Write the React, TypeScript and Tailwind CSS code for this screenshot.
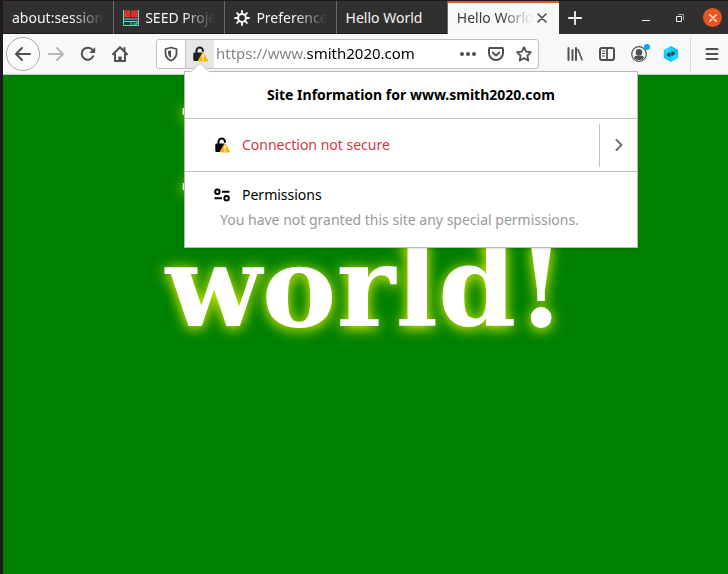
import React, { useState } from "react";

type IconProps = { className?: string };

const ArrowIcon = ({ className = "" }: IconProps) => (
  <svg viewBox="0 0 16 16" className={`size-4 ${className}`} fill="none" stroke="currentColor" strokeWidth="2" strokeLinecap="round" strokeLinejoin="round" aria-hidden="true">
    <path d="M15 8H1.5M7 2 1 8l6 6" />
  </svg>
);

const ReloadIcon = () => (
  <svg viewBox="0 0 16 16" className="size-4" aria-hidden="true">
    <path d="M13.2 10.2A6 6 0 1 1 12.6 4.2" fill="none" stroke="currentColor" strokeWidth="2" strokeLinecap="round" />
    <path d="M15.2 1v5.2a.8.8 0 0 1-.8.8H9.2z" fill="currentColor" />
  </svg>
);

const HomeIcon = () => (
  <svg viewBox="0 0 16 16" className="size-4" fill="none" stroke="currentColor" strokeWidth="2" strokeLinecap="round" strokeLinejoin="round" aria-hidden="true">
    <path d="M1 8.2 8 1.3l7 6.900M3 8v7h10V8" />
    <path d="M8 14.500V10.500" strokeWidth="3.200" strokeLinecap="butt" />
    <path d="M12.500 2v2" />
  </svg>
);

const ShieldIcon = () => (
  <svg viewBox="0 0 16 16" className="size-4" aria-hidden="true">
    <path d="M8 1.500 13.500 3v4c0 3.500-2 6.200-5.500 7.700C4.500 13.200 2.500 10.500 2.500 7V3z" fill="none" stroke="currentColor" strokeWidth="1.800" strokeLinejoin="round" />
    <path d="M8 4.200v7.800C6 10.700 5 9 5 7V4.900z" fill="currentColor" />
  </svg>
);

const InsecureLockIcon = () => (
  <svg viewBox="0 0 16 16" className="size-4" aria-hidden="true">
    <path d="M4.500 7.500V4.600a3.200 3.200 0 0 1 6.400 0v1.200" fill="none" stroke="currentColor" strokeWidth="2" />
    <path d="M2.500 6.500h8L6 15H2.500a1.200 1.200 0 0 1-1.200-1.200V7.700a1.200 1.200 0 0 1 1.200-1.200z" fill="currentColor" />
    <path d="M11 7.600 15 14.500H7z" fill="#ffbf00" stroke="#ffb000" strokeWidth="1.800" strokeLinejoin="round" />
    <path d="M11 8.500v3.500M11 13v1.400" stroke="#fff" strokeWidth="1.400" />
  </svg>
);

const PocketIcon = () => (
  <svg viewBox="0 0 16 16" className="size-4" fill="none" stroke="currentColor" strokeWidth="2" strokeLinecap="round" strokeLinejoin="round" aria-hidden="true">
    <path d="M2 2h12a1 1 0 0 1 1 1v4a7 7 0 0 1-14 0V3a1 1 0 0 1 1-1z" />
    <path d="m4.800 6.500 3.200 3 3.200-3" />
  </svg>
);

const StarIcon = () => (
  <svg viewBox="0 0 16 16" className="size-4" fill="none" stroke="currentColor" strokeWidth="1.800" strokeLinejoin="round" aria-hidden="true">
    <path d="m8 1.200 2.100 4.400 4.800.6-3.500 3.400.9 4.900L8 12.100l-4.300 2.400.9-4.900L1.100 6.200l4.800-.6z" />
  </svg>
);

const LibraryIcon = () => (
  <svg viewBox="0 0 16 16" className="size-4" fill="none" stroke="currentColor" strokeWidth="2" strokeLinecap="round" aria-hidden="true">
    <path d="M1.500 2v12M5.500 4v10M9 2v12" />
    <path d="m11 3.500 4 10.300" strokeWidth="1.600" />
  </svg>
);

const SidebarIcon = () => (
  <svg viewBox="0 0 16 16" className="size-4" fill="none" stroke="currentColor" aria-hidden="true">
    <rect x="1" y="2" width="14" height="12" rx="2" strokeWidth="2" />
    <path d="M8 2v12" strokeWidth="1.800" />
    <path d="M3 5h3M3 7.500h3M3 10h3" strokeWidth="1" />
  </svg>
);

const AccountIcon = () => (
  <svg viewBox="0 0 16 16" className="size-4" aria-hidden="true">
    <circle cx="8" cy="8" r="7.300" fill="none" stroke="currentColor" strokeWidth="1.200" />
    <circle cx="8" cy="6.200" r="3.300" fill="currentColor" />
    <path d="M2.800 11.500C4 9.900 5.500 9.600 8 9.600s4 .3 5.200 1.900A6 6 0 0 1 8 14a6 6 0 0 1-5.200-2.500z" fill="currentColor" />
  </svg>
);

const HexagonIcon = () => (
  <svg viewBox="0 0 16 16" className="size-4" aria-hidden="true">
    <defs>
      <linearGradient id="hex" x1="0" y1="1" x2="1" y2="0">
        <stop offset="0" stopColor="#12aefc" />
        <stop offset="0.500" stopColor="#14e4fb" />
        <stop offset="1" stopColor="#1599fd" />
      </linearGradient>
    </defs>
    <path d="m8 0 7.200 4v8L8 16 .8 12V4z" fill="url(#hex)" />
    <path d="m3.200 8.800 4-3.200v6zM8.600 4.800 12.800 7.400l-4.200 3z" fill="#38485a" />
    <path d="M6 8.800h2.500M8 7.400h2" stroke="#38485a" strokeWidth="1.400" />
  </svg>
);

const PermissionsIcon = () => (
  <svg viewBox="0 0 16 16" className="size-4" fill="none" stroke="currentColor" strokeWidth="2" aria-hidden="true">
    <circle cx="3.400" cy="4.800" r="2.200" />
    <path d="M8 4.800h7.500M.500 11.200H8" />
    <circle cx="12.600" cy="11.200" r="2.200" />
  </svg>
);

const GearIcon = () => (
  <svg viewBox="0 0 16 16" className="size-4 shrink-0" fill="none" stroke="#f9f9fa" strokeLinecap="round" aria-hidden="true">
    <circle cx="8" cy="8" r="3.900" strokeWidth="2" />
    <path d="M8 1v2.500M8 12.500V15M1 8h2.500M12.500 8H15M3.100 3.100l1.700 1.700M11.200 11.200l1.700 1.700M3.100 12.900l1.700-1.700M11.200 4.800l1.700-1.700" strokeWidth="1.900" />
  </svg>
);

const SeedIcon = () => (
  <svg viewBox="0 0 16 16" className="size-4 shrink-0" aria-hidden="true">
    <path d="M0 0h16v16H0z" fill="#4fe0c0" />
    <path d="M1 0h14v15H1z" fill="#25363a" />
    <path d="M1 .5h6.300v6.500H1zM8.300 .5H15v6.500H8.300z" fill="#f0352b" />
    <path d="M1 2.500h4M3 4.800h4M9.500 2.500H15M9.500 4.800H15" stroke="#a02a26" strokeWidth=".8" />
    <path d="M1 9h14M1 11.500h13M8 11v4M10 14h4v-3" stroke="#4fe0c0" fill="none" />
  </svg>
);

const CloseIcon = ({ className = "" }: IconProps) => (
  <svg viewBox="0 0 10 10" className={`size-2.5 ${className}`} fill="none" stroke="currentColor" strokeWidth="1.600" strokeLinecap="round" aria-hidden="true">
    <path d="m1 1 8 8M9 1 1 9" />
  </svg>
);

const tabs: { title: string; icon?: React.ReactNode; fits?: boolean }[] = [
  { title: "about:sessionrestore" },
  { title: "SEED Project", icon: <SeedIcon /> },
  { title: "Preferences", icon: <GearIcon /> },
  { title: "Hello World", fits: true },
];

const LABEL = "min-w-0 flex-1 overflow-hidden whitespace-nowrap text-left";
const FADE = `${LABEL} [mask-image:linear-gradient(to_right,black_calc(100%-32px),transparent)]`;

function TabStrip() {
  return (
    <header className="flex h-[34px] items-stretch border-t border-[#1c1819] bg-[#322f30] text-[#f4f4f4]">
      <div role="tablist" className="grid max-w-[556px] flex-1 grid-cols-5">
        {tabs.map((tab) => (
          <button key={tab.title} role="tab" aria-selected="false" className="flex min-w-0 items-center gap-1.5 border-r border-[#6b696a] px-[9px] shadow-[inset_0_-1px_#1c1819]">
            {tab.icon}
            <span className={tab.fits ? LABEL : FADE}>{tab.title}</span>
          </button>
        ))}
        <div className="flex min-w-0 items-center bg-[#f8f8f8] pr-3 pl-[9px] text-[#3b3b3f] shadow-[inset_0_2px_#e95420]">
          <button role="tab" aria-selected="true" className={FADE}>Hello World</button>
          <button aria-label="Close tab" className="ml-1 text-[#4a4a4a]"><CloseIcon /></button>
        </div>
      </div>
      <button aria-label="New tab" className="flex w-8 items-center justify-center">
        <svg viewBox="0 0 14 14" className="size-3.5" stroke="currentColor" strokeWidth="1.800" strokeLinecap="round" aria-hidden="true"><path d="M7 .8v12.400M.8 7h12.400" /></svg>
      </button>
      <div className="ml-auto flex items-center">
        <button aria-label="Minimize" className="flex h-full w-[34px] items-center justify-center">
          <svg viewBox="0 0 8 8" className="size-2" aria-hidden="true"><path d="M0 6h8v1H0z" fill="currentColor" /></svg>
        </button>
        <button aria-label="Restore" className="flex h-full w-[34px] items-center justify-center">
          <svg viewBox="0 0 8 8" className="size-2" fill="none" stroke="currentColor" aria-hidden="true"><path d="M.500 2.500h5v5h-5z" /><path d="M2 .500h5.500V6" opacity=".6" /></svg>
        </button>
        <button aria-label="Close window" className="mr-1.5 ml-1.5 flex size-[19px] items-center justify-center rounded-full bg-[#e95420] text-white">
          <CloseIcon className="p-px" />
        </button>
      </div>
    </header>
  );
}

function SitePanel() {
  return (
    <section aria-label="Site information" className="absolute top-[31px] -left-px z-10 w-[454px] border border-[#b8b8b8] bg-white text-black shadow-sm">
      <svg viewBox="0 0 20 10" className="absolute -top-[9px] left-[5px] h-2.5 w-5" aria-hidden="true">
        <path d="M0 9.500 10 .5l10 9" fill="#fff" stroke="#d0d0d0" />
        <path d="M1 10 10 1.500 19 10z" fill="#fff" />
      </svg>
      <h2 className="flex h-[47px] items-center justify-center border-b border-[#c3c3c3] font-bold">Site Information for www.smith2020.com</h2>
      <div className="flex h-[53px] items-center border-b border-[#c3c3c3]">
        <div className="flex flex-1 items-center gap-3 pl-[29px]">
          <InsecureLockIcon />
          <p className="text-[#d7373f]">Connection not secure</p>
        </div>
        <button aria-label="Show connection details" className="flex h-[43px] w-[38px] items-center justify-center border-l border-[#c3c3c3] text-[#6f6f6f]">
          <svg viewBox="0 0 8 12" className="h-3 w-2" fill="none" stroke="currentColor" strokeWidth="2" strokeLinecap="round" strokeLinejoin="round" aria-hidden="true"><path d="m1.500 1 5 5-5 5" /></svg>
        </button>
      </div>
      <div className="pt-[13px] pb-[17px]">
        <div className="flex items-center gap-3 pl-[29px]">
          <PermissionsIcon />
          <h3>Permissions</h3>
        </div>
        <p className="mt-[5px] pl-[35px] text-[#9a9a9a]">You have not granted this site any special permissions.</p>
      </div>
    </section>
  );
}

const TOOL = "flex h-8 w-8 shrink-0 items-center justify-center";

function Toolbar() {
  const [url, setUrl] = useState("https://www.smith2020.com");
  return (
    <nav className="flex h-[41px] items-center border-b border-[#c8c8c8] bg-[#f8f8f8] text-[#505050]">
      <button aria-label="Back" className="ml-[3px] flex size-[34px] shrink-0 items-center justify-center rounded-full border border-[#a8a8a8] bg-[#fcfcfc]"><ArrowIcon /></button>
      <button aria-label="Forward" disabled className={`${TOOL} text-[#b8b8b8]`}><ArrowIcon className="rotate-180" /></button>
      <button aria-label="Reload" className={TOOL}><ReloadIcon /></button>
      <button aria-label="Home" className={TOOL}><HomeIcon /></button>
      <div className="mx-5 flex h-[30px] min-w-0 flex-1 items-center rounded-[3px] border border-[#c0c0c0] bg-white">
        <button aria-label="Tracking protection" className="flex w-7 shrink-0 items-center justify-center"><ShieldIcon /></button>
        <div className="relative h-full">
          <button aria-label="Site information" aria-expanded="true" className="flex h-full w-[29px] items-center justify-center border-l border-[#c3c3c3] bg-[#e6e6e6] text-[#202020]"><InsecureLockIcon /></button>
          <SitePanel />
        </div>
        <input
          aria-label="Address"
          value={url}
          onChange={(event) => setUrl(event.target.value)}
          className="min-w-0 flex-1 bg-linear-to-r from-[#808080] from-[92px] to-black to-[92px] bg-clip-text pl-0.5 text-[15px] text-transparent outline-none"
        />
        <button aria-label="Page actions" className="flex w-7 shrink-0 items-center justify-center">
          <svg viewBox="0 0 16 16" className="size-4" fill="currentColor" aria-hidden="true"><circle cx="2" cy="8" r="2" /><circle cx="8" cy="8" r="2" /><circle cx="14" cy="8" r="2" /></svg>
        </button>
        <button aria-label="Save to Pocket" className="flex w-7 shrink-0 items-center justify-center"><PocketIcon /></button>
        <button aria-label="Bookmark this page" className="flex w-7 shrink-0 items-center justify-center"><StarIcon /></button>
      </div>
      <button aria-label="Library" className={TOOL}><LibraryIcon /></button>
      <button aria-label="Sidebars" className={TOOL}><SidebarIcon /></button>
      <button aria-label="Account" className={`${TOOL} relative`}>
        <AccountIcon />
        <span className="absolute top-1.5 right-[5px] size-1.5 rounded-full bg-[#00a8f8]" />
      </button>
      <button aria-label="Extension" className={TOOL}><HexagonIcon /></button>
      <div className="ml-[3px] h-[34px] w-px shrink-0 bg-[#d8d8d8]" />
      <button aria-label="Menu" className="ml-1 flex h-8 w-[33px] shrink-0 items-center justify-center">
        <svg viewBox="0 0 14 14" className="size-3.5" stroke="currentColor" strokeWidth="2" strokeLinecap="round" aria-hidden="true"><path d="M1.500 2h11M1.500 7h11M1.500 12h11" /></svg>
      </button>
    </nav>
  );
}

export default function App() {
  return (
    <div className="flex min-h-screen flex-col border-l-[3px] border-[#1e191e] bg-[#008000] font-['Noto_Sans',sans-serif] text-sm">
      <TabStrip />
      <Toolbar />
      <main className="flex-1 pt-2">
        <h1 className="text-center font-['DejaVu_Serif',serif] text-[112px] leading-[136px] font-bold text-white [text-shadow:0_2px_14px_yellow]">
          Hello,<br />world!
        </h1>
      </main>
    </div>
  );
}
